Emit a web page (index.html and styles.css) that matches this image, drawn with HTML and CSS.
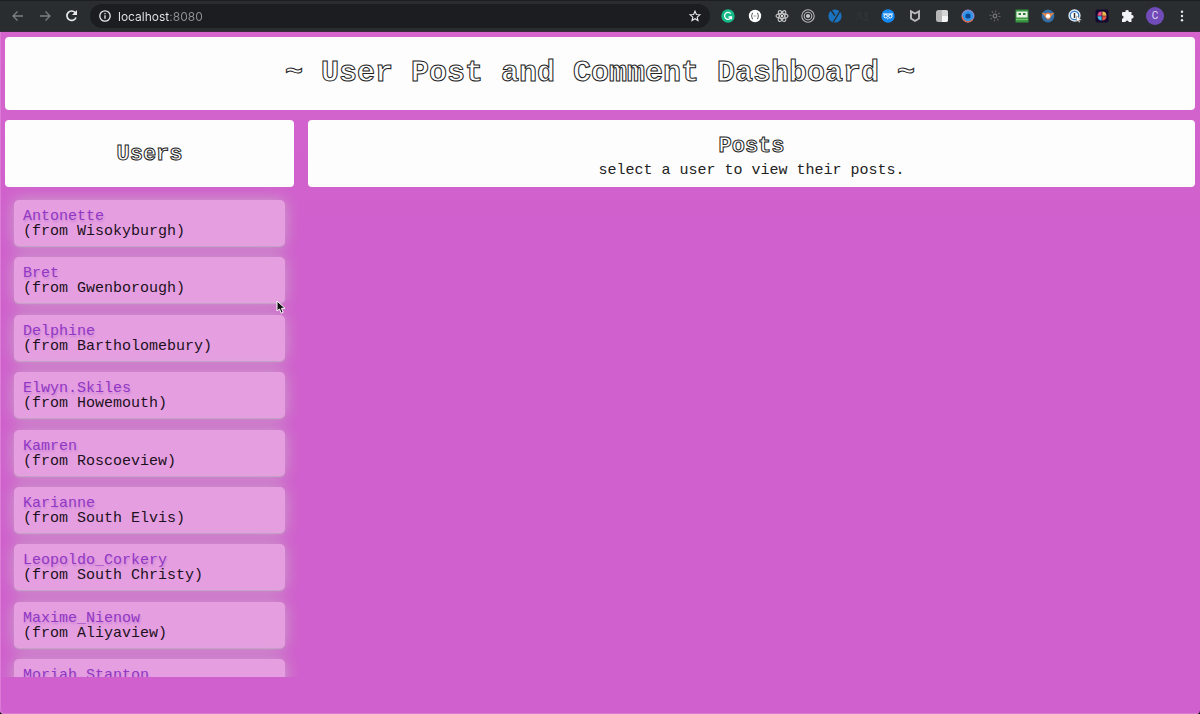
FILE: index.html
```html
<!DOCTYPE html>
<html lang="en">
<head>
<meta charset="utf-8">
<title>User Post and Comment Dashboard</title>
<link rel="stylesheet" href="styles.css">
</head>
<body>
<header class="toolbar">
  <nav class="nav">
    <button class="tool dim" aria-label="Back"><svg width="16" height="16" viewBox="0 0 16 16"><path d="M13 8H3M7.500 3.500L3 8l4.500 4.500"/></svg></button>
    <button class="tool dim" aria-label="Forward"><svg width="16" height="16" viewBox="0 0 16 16"><path d="M3 8H13M8.500 3.500L13 8l-4.500 4.500"/></svg></button>
    <button class="tool" aria-label="Reload"><svg width="16" height="16" viewBox="0 0 16 16"><path d="M12 9.500A4.700 4.700 0 1 1 11.500 5" stroke-width="1.700"/><path d="M13 2v5H8z" fill="#e8eaed" stroke="none"/></svg></button>
  </nav>
  <div class="omnibox">
    <svg width="14" height="14" viewBox="0 0 14 14"><circle cx="7" cy="7" r="5.200"/><path d="M7 6.300v3.400M7 4v1.200"/></svg>
    <input class="url" type="text" value="localhost:8080" aria-label="Address">
    <button class="tool" aria-label="Bookmark"><svg width="14" height="14" viewBox="0 0 14 14"><path d="M7 2.200l1.400 3.300 3.500.3-2.700 2.300.8 3.400L7 9.700l-3 1.800.8-3.400-2.700-2.300 3.500-.3z" stroke-width="1.100"/></svg></button>
  </div>
  <div class="extensions">
    <button class="tool" aria-label="Grammar"><svg width="14" height="14" viewBox="0 0 14 14"><circle cx="7" cy="7" r="6.700" fill="#15b887" stroke="none"/><path d="M9.800 4.600A3.500 3.500 0 1 0 10.400 8H7.500M10.500 8v2.300" stroke="#fff" stroke-width="1.300"/></svg></button>
    <button class="tool" aria-label="JSON"><svg width="14" height="14" viewBox="0 0 14 14"><circle cx="7" cy="7" r="6.200" fill="#fff" stroke="none"/><path d="M5 4c-1.500 0-.5 2.500-1.800 3C4.500 7.500 3.500 10 5 10M9 4c1.500 0 .5 2.500 1.800 3C9.500 7.500 10.500 10 9 10M5.800 7h.7M7.500 7h.7" stroke="#444" stroke-width="1"/></svg></button>
    <button class="tool" aria-label="React tools"><svg width="14" height="14" viewBox="0 0 14 14"><g stroke="#c8c8c8" stroke-width="1.100"><ellipse cx="7" cy="7" rx="6" ry="2.400"/><ellipse cx="7" cy="7" rx="6" ry="2.400" transform="rotate(60 7 7)"/><ellipse cx="7" cy="7" rx="6" ry="2.400" transform="rotate(120 7 7)"/></g><circle cx="7" cy="7" r="1.200" fill="#ddd" stroke="none"/></svg></button>
    <button class="tool" aria-label="Target"><svg width="14" height="14" viewBox="0 0 14 14"><g stroke="#b5b5b5" stroke-width="1.100"><circle cx="7" cy="7" r="6.200"/><circle cx="7" cy="7" r="3.800"/></g><circle cx="7" cy="7" r="2.100" fill="#c5c5c5" stroke="none"/></svg></button>
    <button class="tool" aria-label="Filter"><svg width="14" height="14" viewBox="0 0 14 14"><circle cx="7" cy="7" r="6.600" fill="#1a73c0" stroke="none"/><path d="M3 1l3.800 5.500M12.500 1.500L5 13.500" stroke="#292d30" stroke-width="1.400"/></svg></button>
    <button class="tool" aria-label="People"><svg width="14" height="14" viewBox="0 0 14 14"><path d="M2 11V9l3-1 2 1v2M9 4h3v3H9l3 1v3H9M3 5a1.500 1.500 0 1 0 3 0 1.500 1.500 0 1 0-3 0" stroke="#303437"/></svg></button>
    <button class="tool" aria-label="Owl"><svg width="14" height="14" viewBox="0 0 14 14"><circle cx="7" cy="7" r="6.700" fill="#1688f2" stroke="none"/><g stroke="#fff" stroke-width="1"><circle cx="4.700" cy="7.200" r="1.700"/><circle cx="9.300" cy="7.200" r="1.700"/><path d="M2 5h10M6.300 9.500l.7.700.7-.7"/></g></svg></button>
    <button class="tool" aria-label="Shield"><svg width="14" height="14" viewBox="0 0 14 14"><path d="M3 2.300l4 2.200 4-2.200v7.200l-4 2.500-4-2.500z" stroke="#b9bbbd" stroke-width="1.900"/></svg></button>
    <button class="tool" aria-label="Squares"><svg width="14" height="14" viewBox="0 0 14 14"><rect x="1" y="1" width="12" height="12" rx="2.500" fill="#b6b6b6" stroke="none"/><path d="M7 7h6v4q0 2-2 2H7z" fill="#f4f4f4" stroke="none"/><path d="M7 1h4q2 0 2 2v4H7z" fill="#d5d5d5" stroke="none"/></svg></button>
    <button class="tool" aria-label="Lens"><svg width="14" height="14" viewBox="0 0 14 14"><circle cx="7" cy="7" r="5.800" fill="#2d95ea" stroke="#8c8bd0" stroke-width="1.300"/><path d="M1.200 7.500A5.800 5.800 0 0 0 11.500 10.600" stroke="#e36a42" stroke-width="1.300"/><circle cx="7" cy="7" r="2.600" fill="#0c458f" stroke="none"/></svg></button>
    <button class="tool" aria-label="Gear"><svg width="14" height="14" viewBox="0 0 14 14"><circle cx="7" cy="7" r="1.800" stroke="#777"/><circle cx="7" cy="7" r="4.500" stroke="#66686a" stroke-width="2" stroke-dasharray="1 2.500"/></svg></button>
    <button class="tool" aria-label="Robot"><svg width="14" height="14" viewBox="0 0 14 14"><path d="M.5.500h13v13H.5z" fill="#36933f" stroke="none"/><path d="M1.500 2.500h11v6h-11z" fill="#e7f1e4" stroke="none"/><path d="M3.500 5h2.500M8 5h2.500" stroke="#2f7b38" stroke-width="1.800"/><path d="M1 10.500h12" stroke="#75c46f"/></svg></button>
    <button class="tool" aria-label="Badge"><svg width="14" height="14" viewBox="0 0 14 14"><circle cx="7" cy="7" r="6.400" fill="#356da6" stroke="none"/><path d="M.5 3.500l3.500 1 3-1 3 1 3.500-1-3 3.500-2 3.500H6L3.500 7z" fill="#e5854d" stroke="none"/><circle cx="7" cy="7.200" r="2.100" fill="#fff" stroke="none"/></svg></button>
    <button class="tool" aria-label="Passwords"><svg width="14" height="14" viewBox="0 0 14 14"><circle cx="6.500" cy="6.500" r="5.500" fill="#fff" stroke="#dfe9f5"/><circle cx="6.500" cy="6.500" r="4.200" stroke="#397fc4" stroke-width="1.300"/><path d="M6.500 4v5" stroke="#333" stroke-width="1.500"/><path d="M8.500 7v6l1.500-1.500 1 2 1-.5-.8-2H13.500z" fill="#fff" stroke="#777" stroke-width=".5"/></svg></button>
    <button class="tool" aria-label="Color wheel"><svg width="14" height="14" viewBox="0 0 14 14"><rect x=".5" y=".5" width="13" height="13" rx="2" fill="#150931" stroke="none"/><g stroke="none"><path d="M6.700 6.700V2.500a4.300 4.300 0 0 0-4.200 4.200z" fill="#e84a83"/><path d="M7.300 6.700V2.500a4.300 4.300 0 0 1 4.200 4.200z" fill="#f2b84b"/><path d="M6.700 7.300v4.200a4.300 4.300 0 0 1-4.200-4.200z" fill="#43b9e5"/><path d="M7.300 7.300v4.200a4.300 4.300 0 0 0 4.200-4.200z" fill="#ef5545"/></g></svg></button>
    <button class="tool" aria-label="Extensions"><svg width="14" height="14" viewBox="0 0 14 14"><path d="M1 4q0-1 1-1h2.500a1.700 1.700 0 1 1 3.300 0H10.500v3.200a1.700 1.700 0 1 1 0 3.300V13H7.700a1.600 1.600 0 0 0-3.200 0H1V9.700a1.600 1.600 0 0 0 0-3.200z" fill="#f1f3f4" stroke="none"/></svg></button>
    <button class="avatar" aria-label="Profile">C</button>
    <button class="tool" aria-label="Menu"><svg width="14" height="14" viewBox="0 0 14 14"><g fill="#e8eaed" stroke="none"><circle cx="7" cy="2.700" r="1.200"/><circle cx="7" cy="7" r="1.200"/><circle cx="7" cy="11.300" r="1.200"/></g></svg></button>
  </div>
</header>
<main class="page">
  <div class="panel banner"><h1 class="title">~ User Post and Comment Dashboard ~</h1></div>
  <div class="columns">
    <section class="column">
      <div class="panel heading"><h2 class="subtitle">Users</h2></div>
      <div class="scroller">
        <div class="users">
          <button class="user"><span class="name">Antonette</span><span>(from Wisokyburgh)</span></button>
          <button class="user"><span class="name">Bret</span><span>(from Gwenborough)</span></button>
          <button class="user"><span class="name">Delphine</span><span>(from Bartholomebury)</span></button>
          <button class="user"><span class="name">Elwyn.Skiles</span><span>(from Howemouth)</span></button>
          <button class="user"><span class="name">Kamren</span><span>(from Roscoeview)</span></button>
          <button class="user"><span class="name">Karianne</span><span>(from South Elvis)</span></button>
          <button class="user"><span class="name">Leopoldo_Corkery</span><span>(from South Christy)</span></button>
          <button class="user"><span class="name">Maxime_Nienow</span><span>(from Aliyaview)</span></button>
          <button class="user"><span class="name">Moriah.Stanton</span></button>
        </div>
      </div>
    </section>
    <section class="column">
      <div class="panel heading posts"><h2 class="subtitle">Posts</h2><p class="hint">select a user to view their posts.</p></div>
    </section>
  </div>
</main>
<svg class="pointer" width="10" height="15" viewBox="0 0 10 15"><path d="M1 1v10l2.500-2 1.700 4.200 2-.9L5.500 8.300H9z" fill="#111" stroke="#fff"/></svg>
</body>
</html>
```
FILE: styles.css
```css
* { box-sizing: border-box; }

body {
  margin: 0;
  height: 100vh;
  overflow: hidden;
  display: flex;
  flex-direction: column;
  background: #000;
  font-family: "Liberation Mono", "Courier New", monospace;
  font-size: 15px;
  line-height: 15px;
}

button {
  border: 0;
  padding: 0;
  background: none;
  font: inherit;
}

.toolbar {
  flex: none;
  display: flex;
  align-items: center;
  height: 32px;
  padding: 0 10px;
  background: #292d30;
  border-top: 1px solid #1c1e20;
  border-bottom: 1px solid #3a2b3c;
}

.tool { display: grid; place-items: center; }
.tool svg, .omnibox svg { display: block; fill: none; stroke: #e8eaed; stroke-width: 1.3; }
.dim svg { stroke: #7c7f82; }

.nav { display: flex; gap: 11px; margin-right: 10px; }

.omnibox {
  flex: 1;
  display: flex;
  align-items: center;
  gap: 6px;
  height: 24px;
  padding: 0 8px;
  border-radius: 12px;
  background: #1c1d20;
}

.url {
  flex: 1;
  min-width: 0;
  border: 0;
  padding: 0;
  outline: 0;
  font: 12px Inter, sans-serif;
  color: transparent;
  background: linear-gradient(90deg, #e8eaed 51px, #8c8f93 51px);
  -webkit-background-clip: text;
  background-clip: text;
}

.extensions {
  display: grid;
  grid-template-columns: repeat(18, 1fr);
  justify-items: center;
  align-items: center;
  width: 480px;
  margin-left: 5px;
  margin-right: -5px;
}

.avatar {
  width: 18px;
  height: 18px;
  border-radius: 50%;
  background: #714bb8;
  color: #e5dcf5;
  font: 10px/18px Roboto, sans-serif;
}

.page {
  flex: 1;
  min-height: 0;
  display: flex;
  flex-direction: column;
  gap: 10px;
  padding: 5px 5px 37px 5px;
  border-radius: 0 0 4px 4px;
  background: linear-gradient(#d564cc, #cf60cd 200px);
  box-shadow: inset 1px -1px 0 #dc7bd6;
}

.panel {
  flex: none;
  border-radius: 4px;
  background: #fdfdfd;
  text-align: center;
  color: #222;
}

.banner { padding: 20px; }

.title, .subtitle {
  margin: 0;
  color: #fff;
  -webkit-text-stroke: 1px #222;
}

.title { font-size: 30px; line-height: 33px; }
.subtitle { font-size: 22px; line-height: 25px; }

.columns {
  flex: 1;
  min-height: 0;
  display: grid;
  grid-template-columns: 289px 1fr;
  gap: 14px;
}

.column { display: flex; flex-direction: column; min-height: 0; }

.heading {
  display: flex;
  flex-direction: column;
  justify-content: center;
  gap: 3px;
  height: 67px;
  padding-top: 1px;
}

.posts { padding-top: 7px; }

.hint { margin: 0; line-height: 18px; }

.scroller {
  flex: 1;
  min-height: 0;
  overflow: hidden;
  margin: 0 -5px;
  padding: 13px 14px 0;
}

.users {
  display: flex;
  flex-direction: column;
  justify-content: space-between;
  min-height: 505px;
}

.user {
  flex: none;
  display: flex;
  flex-direction: column;
  height: 46px;
  padding: 9px 9px 7px;
  border-radius: 5px;
  background: #e59fe0;
  box-shadow: 0 1px 1px #c5a5c5, 0 0 16px #cba6c9;
  text-align: left;
  color: #1d101d;
}

.name { color: #9137c4; text-shadow: 1px 2px 2px #cb82d6; }

.pointer { position: absolute; left: 276px; top: 300px; }
```
